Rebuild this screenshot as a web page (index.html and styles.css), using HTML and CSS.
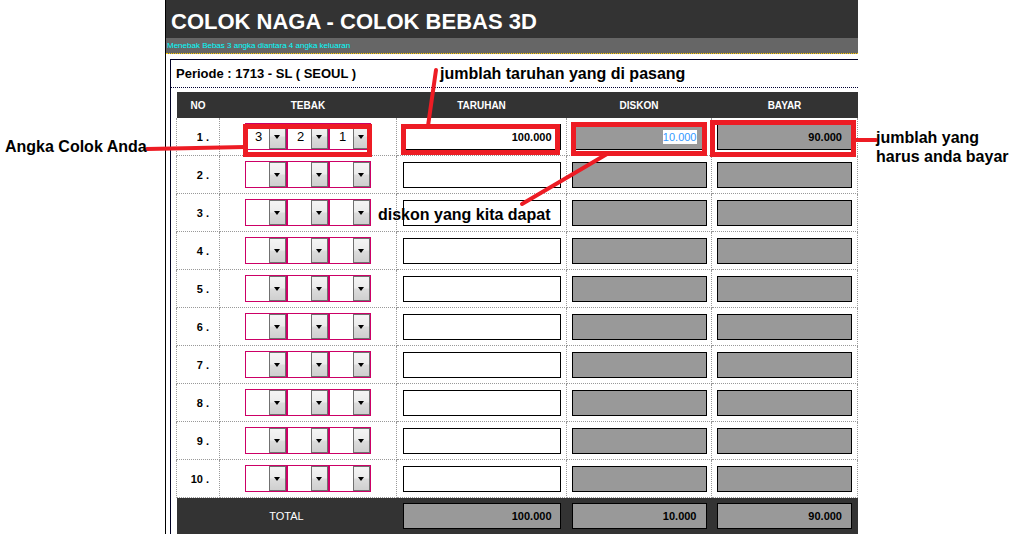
FILE: index.html
```html
<!DOCTYPE html>
<html>
<head>
<meta charset="utf-8">
<title>Colok Naga</title>
<link rel="stylesheet" href="styles.css">
</head>
<body>
<div class="page">
  <div class="form">
    <div class="hd"><h1 class="title">COLOK NAGA - COLOK BEBAS 3D</h1></div>
    <div class="sub">Menebak Bebas 3 angka diantara 4 angka keluaran</div>
    <div class="panel">
      <div class="periode">Periode : 1713 - SL ( SEOUL )</div>
      <table class="grid">
        <colgroup>
          <col class="c-no"><col class="c-tebak"><col class="c-taruhan"><col class="c-diskon"><col class="c-bayar">
        </colgroup>
        <thead>
          <tr><th>NO</th><th>TEBAK</th><th>TARUHAN</th><th>DISKON</th><th>BAYAR</th></tr>
        </thead>
        <tbody>
          <tr>
            <td class="no">1 .</td>
            <td><div class="sels"><div class="sel"><span class="val">3</span><span class="btn"></span></div><div class="sel"><span class="val">2</span><span class="btn"></span></div><div class="sel"><span class="val">1</span><span class="btn"></span></div></div></td>
            <td><div class="inp wide bold">100.000</div></td>
            <td><div class="inp gray"><span class="hl">10.000</span></div></td>
            <td><div class="inp gray bold">90.000</div></td>
          </tr>
          <tr>
            <td class="no">2 .</td>
            <td><div class="sels"><div class="sel"><span class="val"></span><span class="btn"></span></div><div class="sel"><span class="val"></span><span class="btn"></span></div><div class="sel"><span class="val"></span><span class="btn"></span></div></div></td>
            <td><div class="inp wide"></div></td>
            <td><div class="inp gray"></div></td>
            <td><div class="inp gray"></div></td>
          </tr>
          <tr>
            <td class="no">3 .</td>
            <td><div class="sels"><div class="sel"><span class="val"></span><span class="btn"></span></div><div class="sel"><span class="val"></span><span class="btn"></span></div><div class="sel"><span class="val"></span><span class="btn"></span></div></div></td>
            <td><div class="inp wide"></div></td>
            <td><div class="inp gray"></div></td>
            <td><div class="inp gray"></div></td>
          </tr>
          <tr>
            <td class="no">4 .</td>
            <td><div class="sels"><div class="sel"><span class="val"></span><span class="btn"></span></div><div class="sel"><span class="val"></span><span class="btn"></span></div><div class="sel"><span class="val"></span><span class="btn"></span></div></div></td>
            <td><div class="inp wide"></div></td>
            <td><div class="inp gray"></div></td>
            <td><div class="inp gray"></div></td>
          </tr>
          <tr>
            <td class="no">5 .</td>
            <td><div class="sels"><div class="sel"><span class="val"></span><span class="btn"></span></div><div class="sel"><span class="val"></span><span class="btn"></span></div><div class="sel"><span class="val"></span><span class="btn"></span></div></div></td>
            <td><div class="inp wide"></div></td>
            <td><div class="inp gray"></div></td>
            <td><div class="inp gray"></div></td>
          </tr>
          <tr>
            <td class="no">6 .</td>
            <td><div class="sels"><div class="sel"><span class="val"></span><span class="btn"></span></div><div class="sel"><span class="val"></span><span class="btn"></span></div><div class="sel"><span class="val"></span><span class="btn"></span></div></div></td>
            <td><div class="inp wide"></div></td>
            <td><div class="inp gray"></div></td>
            <td><div class="inp gray"></div></td>
          </tr>
          <tr>
            <td class="no">7 .</td>
            <td><div class="sels"><div class="sel"><span class="val"></span><span class="btn"></span></div><div class="sel"><span class="val"></span><span class="btn"></span></div><div class="sel"><span class="val"></span><span class="btn"></span></div></div></td>
            <td><div class="inp wide"></div></td>
            <td><div class="inp gray"></div></td>
            <td><div class="inp gray"></div></td>
          </tr>
          <tr>
            <td class="no">8 .</td>
            <td><div class="sels"><div class="sel"><span class="val"></span><span class="btn"></span></div><div class="sel"><span class="val"></span><span class="btn"></span></div><div class="sel"><span class="val"></span><span class="btn"></span></div></div></td>
            <td><div class="inp wide"></div></td>
            <td><div class="inp gray"></div></td>
            <td><div class="inp gray"></div></td>
          </tr>
          <tr>
            <td class="no">9 .</td>
            <td><div class="sels"><div class="sel"><span class="val"></span><span class="btn"></span></div><div class="sel"><span class="val"></span><span class="btn"></span></div><div class="sel"><span class="val"></span><span class="btn"></span></div></div></td>
            <td><div class="inp wide"></div></td>
            <td><div class="inp gray"></div></td>
            <td><div class="inp gray"></div></td>
          </tr>
          <tr>
            <td class="no">10 .</td>
            <td><div class="sels"><div class="sel"><span class="val"></span><span class="btn"></span></div><div class="sel"><span class="val"></span><span class="btn"></span></div><div class="sel"><span class="val"></span><span class="btn"></span></div></div></td>
            <td><div class="inp wide"></div></td>
            <td><div class="inp gray"></div></td>
            <td><div class="inp gray"></div></td>
          </tr>
        </tbody>
        <tfoot>
          <tr>
            <td colspan="2" class="total-label">TOTAL</td>
            <td><div class="inp gray wide bold">100.000</div></td>
            <td><div class="inp gray bold">10.000</div></td>
            <td><div class="inp gray bold">90.000</div></td>
          </tr>
        </tfoot>
      </table>
    </div>
  </div>
</div>

<div class="rbox rb-sel"></div>
<div class="rbox rb-taruhan"></div>
<div class="rbox rb-diskon"></div>
<div class="rbox rb-bayar"></div>

<svg class="lines" width="1012" height="534" viewBox="0 0 1012 534">
  <g stroke="#ed1c24" stroke-width="4" stroke-linecap="round" fill="none">
    <line x1="436" y1="70" x2="428" y2="126"/>
    <line x1="147" y1="149" x2="245" y2="147"/>
    <line x1="607" y1="154" x2="522" y2="204"/>
    <line x1="853" y1="140" x2="876" y2="140"/>
  </g>
</svg>

<div class="lbl lb-taruhan">jumblah taruhan yang di pasang</div>
<div class="lbl lb-angka">Angka Colok Anda</div>
<div class="lbl lb-diskon">diskon yang kita dapat</div>
<div class="lbl lb-bayar">jumblah yang<br>harus anda bayar</div>
</body>
</html>
```

FILE: styles.css
```css
html, body {
  margin: 0;
  padding: 0;
  overflow: hidden;
  background: #fff;
}
body {
  position: relative;
  width: 1012px;
  height: 534px;
  font-family: "Liberation Sans", Arial, sans-serif;
  color: #000;
}

.page {
  padding-left: 165px;
}
.form {
  width: 692px;
  height: 534px;
  overflow: hidden;
  border-left: 1px solid #000;
}
.hd {
  height: 38px;
  box-sizing: border-box;
  padding: 9px 0 0 5px;
  background: #333;
}
.title {
  margin: 0;
  font-size: 22px;
  line-height: 25px;
  font-weight: bold;
  color: #fff;
}
.sub {
  height: 15px;
  padding-left: 1px;
  background: #666;
  border-bottom: 1px dotted #ffcc00;
  color: #00ffff;
  font-size: 8px;
  line-height: 15px;
}
.panel {
  margin: 5px 0 0 4px;
  border: 1px solid #000022;
  border-right: 0;
}
.periode {
  height: 28px;
  box-sizing: border-box;
  padding: 6px 0 0 5px;
  font-size: 13px;
  line-height: 15px;
  font-weight: bold;
  border-bottom: 1px dotted #000033;
}

.grid {
  margin: 4px 0 0 5px;
  width: 681px;
  border-collapse: collapse;
  table-layout: fixed;
}
.c-no { width: 43px; }
.c-tebak { width: 177px; }
.c-taruhan { width: 170px; }
.c-diskon { width: 145px; }
.c-bayar { width: 146px; }

.grid th {
  height: 26px;
  padding: 0;
  background: #333;
  color: #fff;
  font-size: 10px;
  font-weight: bold;
  text-align: center;
  vertical-align: middle;
  border: 0;
}
.grid tbody td {
  height: 37px;
  padding: 0;
  border: 1px dotted #999;
  vertical-align: middle;
  text-align: center;
}
.grid tbody tr:first-child td {
  border-top: 0;
}
.grid td.no {
  text-align: right;
  padding-right: 10px;
  font-size: 11px;
  font-weight: bold;
}

.sels {
  display: flex;
  justify-content: center;
}
.sel {
  display: flex;
  width: 42px;
  height: 27px;
  box-sizing: border-box;
  border: 1px solid #cc0066;
  background: #fff;
}
.val {
  flex: 1;
  padding-left: 9px;
  text-align: left;
  font-size: 13px;
  line-height: 25px;
}
.btn {
  position: relative;
  width: 17px;
  box-sizing: border-box;
  border: 1px solid #707070;
  background: linear-gradient(#f4f4f4, #ececec 48%, #dcdcdc 52%, #cfcfcf);
}
.btn::after {
  content: "";
  position: absolute;
  left: 4px;
  top: 10px;
  border-left: 3.5px solid transparent;
  border-right: 3.5px solid transparent;
  border-top: 4px solid #000;
}

.inp {
  width: 135px;
  height: 26px;
  margin: 0 auto;
  box-sizing: border-box;
  border: 1px solid #000;
  background: #fff;
  padding-right: 9px;
  text-align: right;
  font-size: 11px;
  line-height: 24px;
}
.inp.wide {
  width: 158px;
  padding-right: 8px;
}
.inp.gray {
  background: #999;
}
.inp.bold {
  font-weight: bold;
}
.hl {
  background: #fff;
  color: #3399ff;
  padding: 1px 0;
}

.grid tfoot td {
  height: 36px;
  padding: 0;
  background: #333;
  border: 0;
  vertical-align: middle;
}
.grid tfoot td.total-label {
  color: #fff;
  font-size: 11px;
  text-align: center;
}

.rbox {
  position: absolute;
  box-sizing: border-box;
  border: 5px solid #ed1c24;
}
.rb-sel { left: 243px; top: 124px; width: 129px; height: 33px; }
.rb-taruhan { left: 401px; top: 124px; width: 159px; height: 31px; }
.rb-diskon { left: 571px; top: 122px; width: 136px; height: 34px; }
.rb-bayar { left: 710px; top: 120px; width: 146px; height: 37px; }

.lines {
  position: absolute;
  left: 0;
  top: 0;
}

.lbl {
  position: absolute;
  font-size: 16px;
  line-height: 19px;
  font-weight: bold;
  color: #000;
  white-space: nowrap;
}
.lb-taruhan { left: 440px; top: 64px; }
.lb-angka { left: 5px; top: 137px; }
.lb-diskon { left: 378px; top: 205px; }
.lb-bayar { left: 876px; top: 128px; }
```
